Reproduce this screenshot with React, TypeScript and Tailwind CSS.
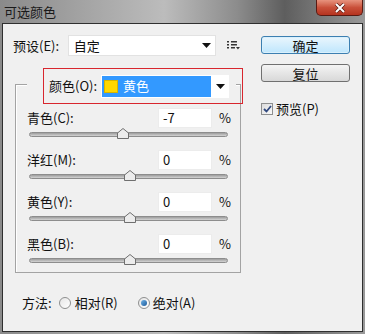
import React from "react";

const sliders = [
  { label: "青色(C):", value: -7 },
  { label: "洋红(M):", value: 0 },
  { label: "黄色(Y):", value: 0 },
  { label: "黑色(B):", value: 0 },
];

const Arrow = () => (
  <svg width="9" height="5" viewBox="0 0 9 5">
    <polygon points="0,0 9,0 4.5,5" fill="#111" />
  </svg>
);

const Slider = ({ label, value }: { label: string; value: number }) => {
  // track runs -100..100, thumb centre follows the value
  const left = 99.5 + (value / 100) * 99.5 - 6;
  return (
    <div className="h-[42px]">
      <div className="flex items-center h-[20px]">
        <span className="w-[131px]">{label}</span>
        <div className="w-[54px] h-[20px] bg-white border border-[#ececec] flex items-center pl-[4px]">
          {value}
        </div>
        <span className="ml-[7px]">%</span>
      </div>
      <div className="relative mt-[4px] ml-[2px] w-[199px] h-[5px] rounded-full border border-[#8d8d8d] bg-gradient-to-b from-[#9d9d9d] to-[#d4d4d4]">
        <svg
          className="absolute top-[-5px]"
          style={{ left }}
          width="12"
          height="11"
          viewBox="0 0 12 11"
        >
          <polygon
            points="6,0.5 11.5,5 11.5,10.5 0.5,10.5 0.5,5"
            fill="#ececec"
            stroke="#6f6f6f"
          />
        </svg>
      </div>
    </div>
  );
};

const Radio = ({ checked }: { checked?: boolean }) => (
  <span className="w-[12px] h-[12px] rounded-full border border-[#8e8f8f] bg-gradient-to-br from-[#e6e6e6] to-[#ffffff] flex items-center justify-center">
    {checked && (
      <span className="w-[6px] h-[6px] rounded-full bg-gradient-to-br from-[#6fb3e8] to-[#1d5b9a]" />
    )}
  </span>
);

export default function App() {
  return (
    <div className="w-[365px] h-[334px] flex flex-col bg-[linear-gradient(90deg,#8a8a8a_0%,#a6a6a6_25%,#bcbcbc_45%,#8c8c8c_65%,#5e5e5e_78%,#9a9a9a_100%)] text-[13px] text-[#111] font-['Noto_Sans_CJK_SC',sans-serif]">
      <div className="h-[23px] flex justify-between">
        <span className="pl-[4px] pt-[2px] text-[13px] text-[#1a1a1a]">可选颜色</span>
        <div className="w-[47px] h-[16px] mr-[2px] rounded-b-[5px] border border-t-0 border-[#5a1a12] bg-gradient-to-b from-[#e7937e] via-[#c9503a] to-[#b5331f] flex items-center justify-center">
          <svg width="12" height="10" viewBox="0 0 12 10">
            <path d="M2 1 L10 9 M10 1 L2 9" stroke="#5a1a12" strokeWidth="3.4" />
            <path d="M2 1 L10 9 M10 1 L2 9" stroke="#fff" strokeWidth="2" />
          </svg>
        </div>
      </div>

      <div className="mx-[2px] h-[309px] border border-[#2f2f2f] bg-[#f0f0f0] flex">
        <div className="w-[238px] pl-[10px] pt-[11px]">
          <div className="flex items-center h-[21px]">
            <span className="w-[55px]">预设(E):</span>
            <div className="w-[149px] h-[21px] bg-white border border-[#e2e2e2] flex items-center justify-between pl-[5px] pr-[4px]">
              <span>自定</span>
              <Arrow />
            </div>
            <svg className="ml-[11px]" width="14" height="9" viewBox="0 0 14 9">
              <rect x="0" y="0" width="2" height="1.5" fill="#333" />
              <rect x="0" y="3" width="2" height="1.5" fill="#333" />
              <rect x="0" y="6" width="2" height="1.5" fill="#333" />
              <rect x="4" y="0" width="6" height="1.5" fill="#333" />
              <rect x="4" y="3" width="6" height="1.5" fill="#333" />
              <rect x="4" y="6" width="4" height="1.5" fill="#333" />
              <polygon points="9,6 13,6 11,8.5" fill="#333" />
            </svg>
          </div>

          <div className="relative mt-[28px] ml-[2px] w-[226px] h-[189px] border border-[#a3a3a3] shadow-[inset_1px_1px_0_#fff]">
            <div className="-mt-[11px] ml-[11px] w-[209px] h-[24px] bg-[#f0f0f0] flex items-center pl-[22px]">
              <span className="w-[52px]">颜色(O):</span>
              <div className="w-[128px] h-[23px] bg-white flex items-center">
                <div className="w-[109px] h-[21px] ml-px bg-[#3399ff] flex items-center pl-[2px]">
                  <span className="w-[14px] h-[13px] bg-[#ffd800] border border-[#d6b400]" />
                  <span className="ml-[5px] text-white">黄色</span>
                </div>
                <div className="flex-1 flex justify-center">
                  <Arrow />
                </div>
              </div>
            </div>
            <div className="absolute left-[27px] top-[-17px] w-[200px] h-[36px] border border-[#d8262e]" />

            <div className="mt-[10px] pl-[11px]">
              {sliders.map((s) => (
                <Slider key={s.label} label={s.label} value={s.value} />
              ))}
            </div>
          </div>

          <div className="mt-[22px] ml-[9px] h-[16px] flex items-center">
            <span>方法:</span>
            <span className="ml-[7px]">
              <Radio />
            </span>
            <span className="ml-[4px]">相对(R)</span>
            <span className="ml-[20px]">
              <Radio checked />
            </span>
            <span className="ml-[3px]">绝对(A)</span>
          </div>
        </div>

        <div className="ml-[20px] pt-[12px] flex flex-col">
          <button className="w-[89px] h-[18px] rounded-[3px] border border-[#3c7fb1] bg-gradient-to-b from-[#eaf6fd] to-[#bee6fd] shadow-[inset_0_0_0_1px_#d9f0fc] leading-none">
            确定
          </button>
          <button className="mt-[10px] w-[89px] h-[18px] rounded-[3px] border border-[#707070] bg-gradient-to-b from-[#f4f4f4] to-[#d8d8d8] leading-none">
            复位
          </button>
          <div className="mt-[17px] flex items-center">
            <span className="w-[12px] h-[12px] border border-[#8e8f8f] bg-gradient-to-br from-[#dcdcdc] to-[#fafafa] flex items-center justify-center">
              <svg width="9" height="8" viewBox="0 0 9 8">
                <path d="M1 4 L3.5 6.5 L8 1" stroke="#31497f" strokeWidth="1.8" fill="none" />
              </svg>
            </span>
            <span className="ml-[3px]">预览(P)</span>
          </div>
        </div>
      </div>
    </div>
  );
}
